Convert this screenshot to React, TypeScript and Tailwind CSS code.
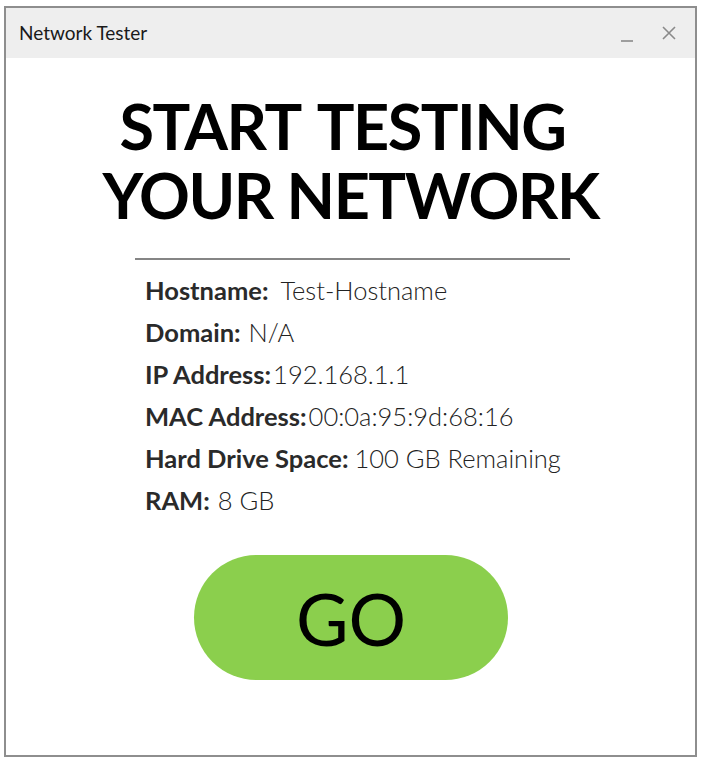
import React from 'react';

const rows = [
  { label: 'Hostname:', value: 'Test-Hostname', gap: 'ml-3' },
  { label: 'Domain:', value: 'N/A', gap: 'ml-2' },
  { label: 'IP Address:', value: '192.168.1.1', gap: 'ml-0.5' },
  { label: 'MAC Address:', value: '00:0a:95:9d:68:16', gap: 'ml-0.5' },
  { label: 'Hard Drive Space:', value: '100 GB Remaining', gap: 'ml-1.5' },
  { label: 'RAM:', value: '8 GB', gap: 'ml-2' },
];

const App: React.FC = () => {
  return (
    <div className="w-[702px] h-[764px] bg-white pt-[6px] pl-[4px] font-['Lato',sans-serif]">
      <div className="w-[693px] h-[751px] border-2 border-[#8e8e8e] flex flex-col">
        {/* Title bar */}
        <div className="h-[50px] bg-[#eeeeee] flex items-center justify-between pl-[13px] pr-[18px]">
          <span className="text-[19px] text-[#1a1a1a]">Network Tester</span>
          <div className="flex items-center gap-[27px] text-[#8a8a8a]">
            <svg width="14" height="14" viewBox="0 0 14 14" className="mt-[6px]">
              <line x1="1" y1="12" x2="13" y2="12" stroke="currentColor" strokeWidth="1.6" />
            </svg>
            <svg width="16" height="16" viewBox="0 0 16 16">
              <path d="M2 2 L14 14 M14 2 L2 14" stroke="currentColor" strokeWidth="1.6" />
            </svg>
          </div>
        </div>

        {/* Content */}
        <div className="flex flex-col items-center">
          <h1 className="mt-[33px] text-center font-bold text-black text-[63px] leading-[69px] tracking-[-1.5px]">
            <span className="block pr-[16px] [word-spacing:6px]">START TESTING</span>
            <span className="block">YOUR NETWORK</span>
          </h1>
          <div className="mt-[29px] w-[435px] h-[2px] bg-[#858585] ml-[3px]" />

          <div className="w-[435px] pl-[12px] mt-[9px] flex flex-col text-[#2a2a2a] text-[25.5px]">
            {rows.map(r => (
              <div key={r.label} className="h-[42px] flex items-center">
                <span className="font-bold">{r.label}</span>
                <span className={`font-light text-[#222222] ${r.gap}`}>{r.value}</span>
              </div>
            ))}
          </div>

          <button className="mt-[34px] w-[314px] h-[125px] rounded-full bg-[#8bcf4d] text-black text-[72px] leading-none ml-[1px]">
            GO
          </button>
        </div>
      </div>
    </div>
  );
};

export default App;
